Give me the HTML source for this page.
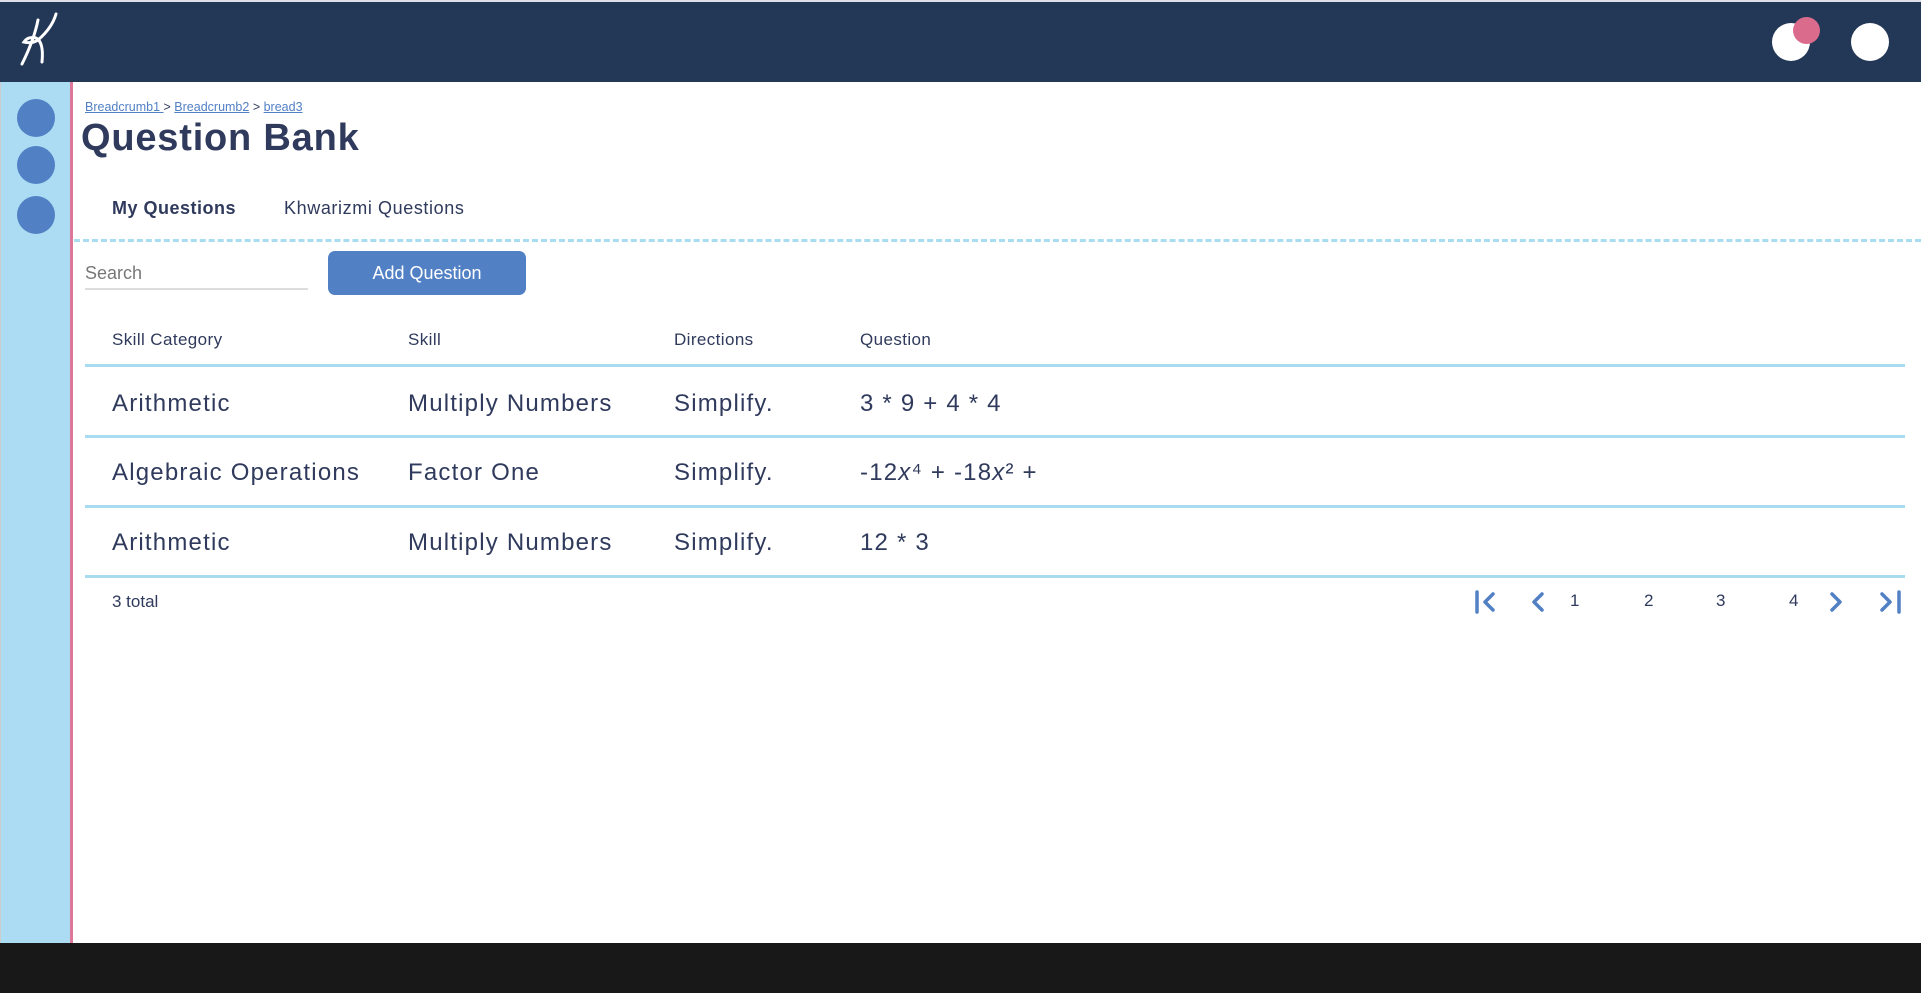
<!DOCTYPE html>
<html><head><meta charset="utf-8"><style>
*{margin:0;padding:0;box-sizing:border-box}
body{width:1921px;height:993px;position:relative;overflow:hidden;background:#fff;font-family:"Liberation Sans",sans-serif;color:#2f3a5c}
.a{position:absolute;white-space:nowrap}
</style></head><body>
<div class="a" style="left:0;top:0;width:1921px;height:2px;background:#dde0e6"></div>
<div class="a" style="left:0;top:2px;width:1921px;height:80px;background:#233756"></div>
<div class="a" style="left:0;top:82px;width:1px;height:911px;background:#ccc"></div>
<svg class="a" style="left:18px;top:10px" width="44" height="58" viewBox="0 0 44 58">
<path d="M20 10 Q16 30 4 54 M38 4 Q34 18 20 30 Q14 34 6 32 Q10 26 18 28 Q26 32 24 52" fill="none" stroke="#fff" stroke-width="3" stroke-linecap="round"/></svg>
<div class="a" style="left:1772px;top:23px;width:38px;height:38px;border-radius:50%;background:#fff"></div>
<div class="a" style="left:1793px;top:17px;width:27px;height:27px;border-radius:50%;background:#db6b8c"></div>
<div class="a" style="left:1851px;top:23px;width:38px;height:38px;border-radius:50%;background:#fff"></div>
<div class="a" style="left:1px;top:82px;width:69px;height:861px;background:#abdcf3"></div>
<div class="a" style="left:70px;top:82px;width:3px;height:861px;background:#df7898"></div>
<div class="a" style="left:17px;top:99px;width:38px;height:38px;border-radius:50%;background:#5180c4"></div>
<div class="a" style="left:17px;top:146px;width:38px;height:38px;border-radius:50%;background:#5180c4"></div>
<div class="a" style="left:17px;top:196px;width:38px;height:38px;border-radius:50%;background:#5180c4"></div>
<div class="a" style="left:0;top:943px;width:1921px;height:50px;background:#181818"></div>
<div class="a" style="left:85px;top:100px;font-size:12.5px;color:#2f3a5c"><span style="color:#5180c4;text-decoration:underline">Breadcrumb1 </span> &gt; <span style="color:#5180c4;text-decoration:underline">Breadcrumb2</span> &gt; <span style="color:#5180c4;text-decoration:underline">bread3</span></div>
<div class="a" style="left:81px;top:117px;font-size:38px;font-weight:bold;color:#2f3a5c;letter-spacing:0.8px">Question Bank</div>
<div class="a" style="left:112px;top:198px;font-size:18px;font-weight:bold;letter-spacing:0.5px">My Questions</div>
<div class="a" style="left:284px;top:198px;font-size:18px;letter-spacing:0.6px">Khwarizmi Questions</div>
<div class="a" style="left:74px;top:239px;width:1847px;border-top:3px dashed #a8dcf0"></div>
<div class="a" style="left:85px;top:263px;font-size:18px;color:#777">Search</div>
<div class="a" style="left:85px;top:288px;width:223px;height:2px;background:#ddd"></div>
<div class="a" style="left:328px;top:251px;width:198px;height:44px;border-radius:7px;background:#5180c4;color:#fff;font-size:18px;text-align:center;line-height:44px">Add Question</div>
<div style="font-size:17px;letter-spacing:0.4px">
<div class="a" style="left:112px;top:330px">Skill Category</div>
<div class="a" style="left:408px;top:330px">Skill</div>
<div class="a" style="left:674px;top:330px">Directions</div>
<div class="a" style="left:860px;top:330px">Question</div>
</div>
<div class="a" style="left:85px;top:364px;width:1820px;height:3px;background:#a8dcf0"></div>
<div style="font-size:24px;letter-spacing:1.2px">
<div class="a" style="left:112px;top:390px">Arithmetic</div>
<div class="a" style="left:408px;top:390px">Multiply Numbers</div>
<div class="a" style="left:674px;top:390px">Simplify.</div>
<div class="a" style="left:860px;top:390px">3 * 9 + 4 * 4</div>
<div class="a" style="left:112px;top:459px">Algebraic Operations</div>
<div class="a" style="left:408px;top:459px">Factor One</div>
<div class="a" style="left:674px;top:459px">Simplify.</div>
<div class="a" style="left:860px;top:459px">-12<i>x</i>⁴ + -18<i>x</i>² +</div>
<div class="a" style="left:112px;top:529px">Arithmetic</div>
<div class="a" style="left:408px;top:529px">Multiply Numbers</div>
<div class="a" style="left:674px;top:529px">Simplify.</div>
<div class="a" style="left:860px;top:529px">12 * 3</div>
</div>
<div class="a" style="left:85px;top:435px;width:1820px;height:3px;background:#a8dcf0"></div>
<div class="a" style="left:85px;top:505px;width:1820px;height:3px;background:#a8dcf0"></div>
<div class="a" style="left:85px;top:575px;width:1820px;height:3px;background:#a8dcf0"></div>
<div class="a" style="left:112px;top:592px;font-size:17px">3 total</div>
<svg class="a" style="left:1470px;top:588px" width="440" height="28" viewBox="0 0 440 28">
<g fill="none" stroke="#5180c4" stroke-width="3.5" stroke-linecap="round" stroke-linejoin="round">
<path d="M7 4 V24"/><path d="M23 6 L15 14 L23 22"/>
<path d="M72 6 L64 14 L72 22"/>
<path d="M362 6 L370 14 L362 22"/>
<path d="M412 6 L420 14 L412 22"/><path d="M429 4 V24"/>
</g></svg>
<div class="a" style="left:1570px;top:591px;font-size:17px">1</div>
<div class="a" style="left:1644px;top:591px;font-size:17px">2</div>
<div class="a" style="left:1716px;top:591px;font-size:17px">3</div>
<div class="a" style="left:1789px;top:591px;font-size:17px">4</div>
</body></html>
